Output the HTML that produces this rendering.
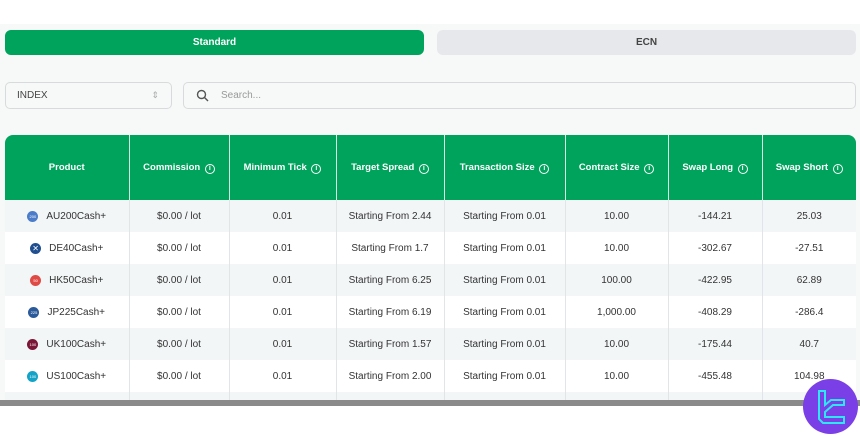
<!DOCTYPE html>
<html><head><style>
body{margin:0;width:860px;height:436px;overflow:hidden;background:#fff;font-family:"Liberation Sans",sans-serif;position:relative}
.bg{position:absolute;left:0;top:24px;width:860px;height:377px;background:#f7f8f8}
.btn{position:absolute;top:30px;height:25px;border-radius:6px;font-size:10px;font-weight:bold;display:flex;align-items:center;justify-content:center}
.inp{position:absolute;top:82px;height:25px;border:1px solid #d8dbde;border-radius:5px;background:#f7f8f8;font-size:10px;display:flex;align-items:center}
.wrap{position:absolute;left:5px;top:135px;width:851px;height:265px;overflow:hidden;border-radius:8px 8px 0 0}
table{width:851px;border-collapse:collapse;table-layout:fixed;font-size:10px;color:#333}
th{background:#00a35c;color:#fff;font-size:9.5px;height:65px;padding:0;border-left:1px solid #d6f0e2;font-weight:bold;white-space:nowrap}
th:first-child{border-left:none}
td{height:32px;padding:0;text-align:center;border-left:1px solid #e2e5e7;white-space:nowrap}
td:first-child{border-left:none}
tr:nth-child(even) td{background:#f3f6f7}
tr:nth-child(odd) td{background:#fff}
.p{display:flex;align-items:center;justify-content:center}
.ic{display:inline-block;width:11px;height:11px;border-radius:50%;margin-right:8px;color:#fff;font-size:4px;line-height:11px;text-align:center}
i{font-style:normal;display:inline-block;width:8px;height:8px;border:1px solid #fff;border-radius:50%;font-size:7px;line-height:8px;margin-left:2px;vertical-align:0}
</style></head><body>
<div class="bg"></div>
<div class="btn" style="left:5px;width:419px;background:#00a35c;color:#fff">Standard</div>
<div class="btn" style="left:437px;width:419px;background:#e6e8eb;color:#444">ECN</div>
<div class="inp" style="left:5px;width:165px;color:#444"><span style="margin-left:11px">INDEX</span><span style="margin-left:auto;margin-right:12px;color:#aaa;font-size:9px">⇕</span></div>
<div class="inp" style="left:183px;width:671px;color:#999"><svg width="14" height="14" style="margin-left:12px" viewBox="0 0 14 14"><circle cx="5.5" cy="5.5" r="4" fill="none" stroke="#555" stroke-width="1.4"/><path d="M8.5 8.5L12 12" stroke="#555" stroke-width="1.4"/></svg><span style="margin-left:11px">Search...</span></div>
<div class="wrap">
<table>
<colgroup><col style="width:124px"><col style="width:100px"><col style="width:107px"><col style="width:108px"><col style="width:121px"><col style="width:103px"><col style="width:94px"><col style="width:94px"></colgroup>
<tr><th>Product</th><th>Commission <i>i</i></th><th>Minimum Tick <i>i</i></th><th>Target Spread <i>i</i></th><th>Transaction Size <i>i</i></th><th>Contract Size <i>i</i></th><th>Swap Long <i>i</i></th><th>Swap Short <i>i</i></th></tr>
<tr><td><div class="p"><span class="ic" style="background:#4a7cc9">200</span>AU200Cash+</div></td><td>$0.00 / lot</td><td>0.01</td><td>Starting From 2.44</td><td>Starting From 0.01</td><td>10.00</td><td>-144.21</td><td>25.03</td></tr>
<tr><td><div class="p"><span class="ic" style="background:#1f4f8f;font-size:8px">✕</span>DE40Cash+</div></td><td>$0.00 / lot</td><td>0.01</td><td>Starting From 1.7</td><td>Starting From 0.01</td><td>10.00</td><td>-302.67</td><td>-27.51</td></tr>
<tr><td><div class="p"><span class="ic" style="background:#e04a44">50</span>HK50Cash+</div></td><td>$0.00 / lot</td><td>0.01</td><td>Starting From 6.25</td><td>Starting From 0.01</td><td>100.00</td><td>-422.95</td><td>62.89</td></tr>
<tr><td><div class="p"><span class="ic" style="background:#2b5a9a">225</span>JP225Cash+</div></td><td>$0.00 / lot</td><td>0.01</td><td>Starting From 6.19</td><td>Starting From 0.01</td><td>1,000.00</td><td>-408.29</td><td>-286.4</td></tr>
<tr><td><div class="p"><span class="ic" style="background:#7a1636">100</span>UK100Cash+</div></td><td>$0.00 / lot</td><td>0.01</td><td>Starting From 1.57</td><td>Starting From 0.01</td><td>10.00</td><td>-175.44</td><td>40.7</td></tr>
<tr><td><div class="p"><span class="ic" style="background:#12a3c7">100</span>US100Cash+</div></td><td>$0.00 / lot</td><td>0.01</td><td>Starting From 2.00</td><td>Starting From 0.01</td><td>10.00</td><td>-455.48</td><td>104.98</td></tr>
<tr><td></td><td></td><td></td><td></td><td></td><td></td><td></td><td></td></tr>
</table>
</div>
<div style="position:absolute;left:0;top:400px;width:860px;height:6px;background:#8a8a8a"></div>
<svg style="position:absolute;left:803px;top:379px" width="55" height="55" viewBox="0 0 55 55"><circle cx="27.5" cy="27.5" r="27.5" fill="#7a3fe6"/><path d="M16 12h6v14l6-5h13v5H30l-8 7v5h19v6H20l-4-4z" fill="none" stroke="#2ee6f5" stroke-width="2" stroke-linejoin="miter"/></svg>
</body></html>
